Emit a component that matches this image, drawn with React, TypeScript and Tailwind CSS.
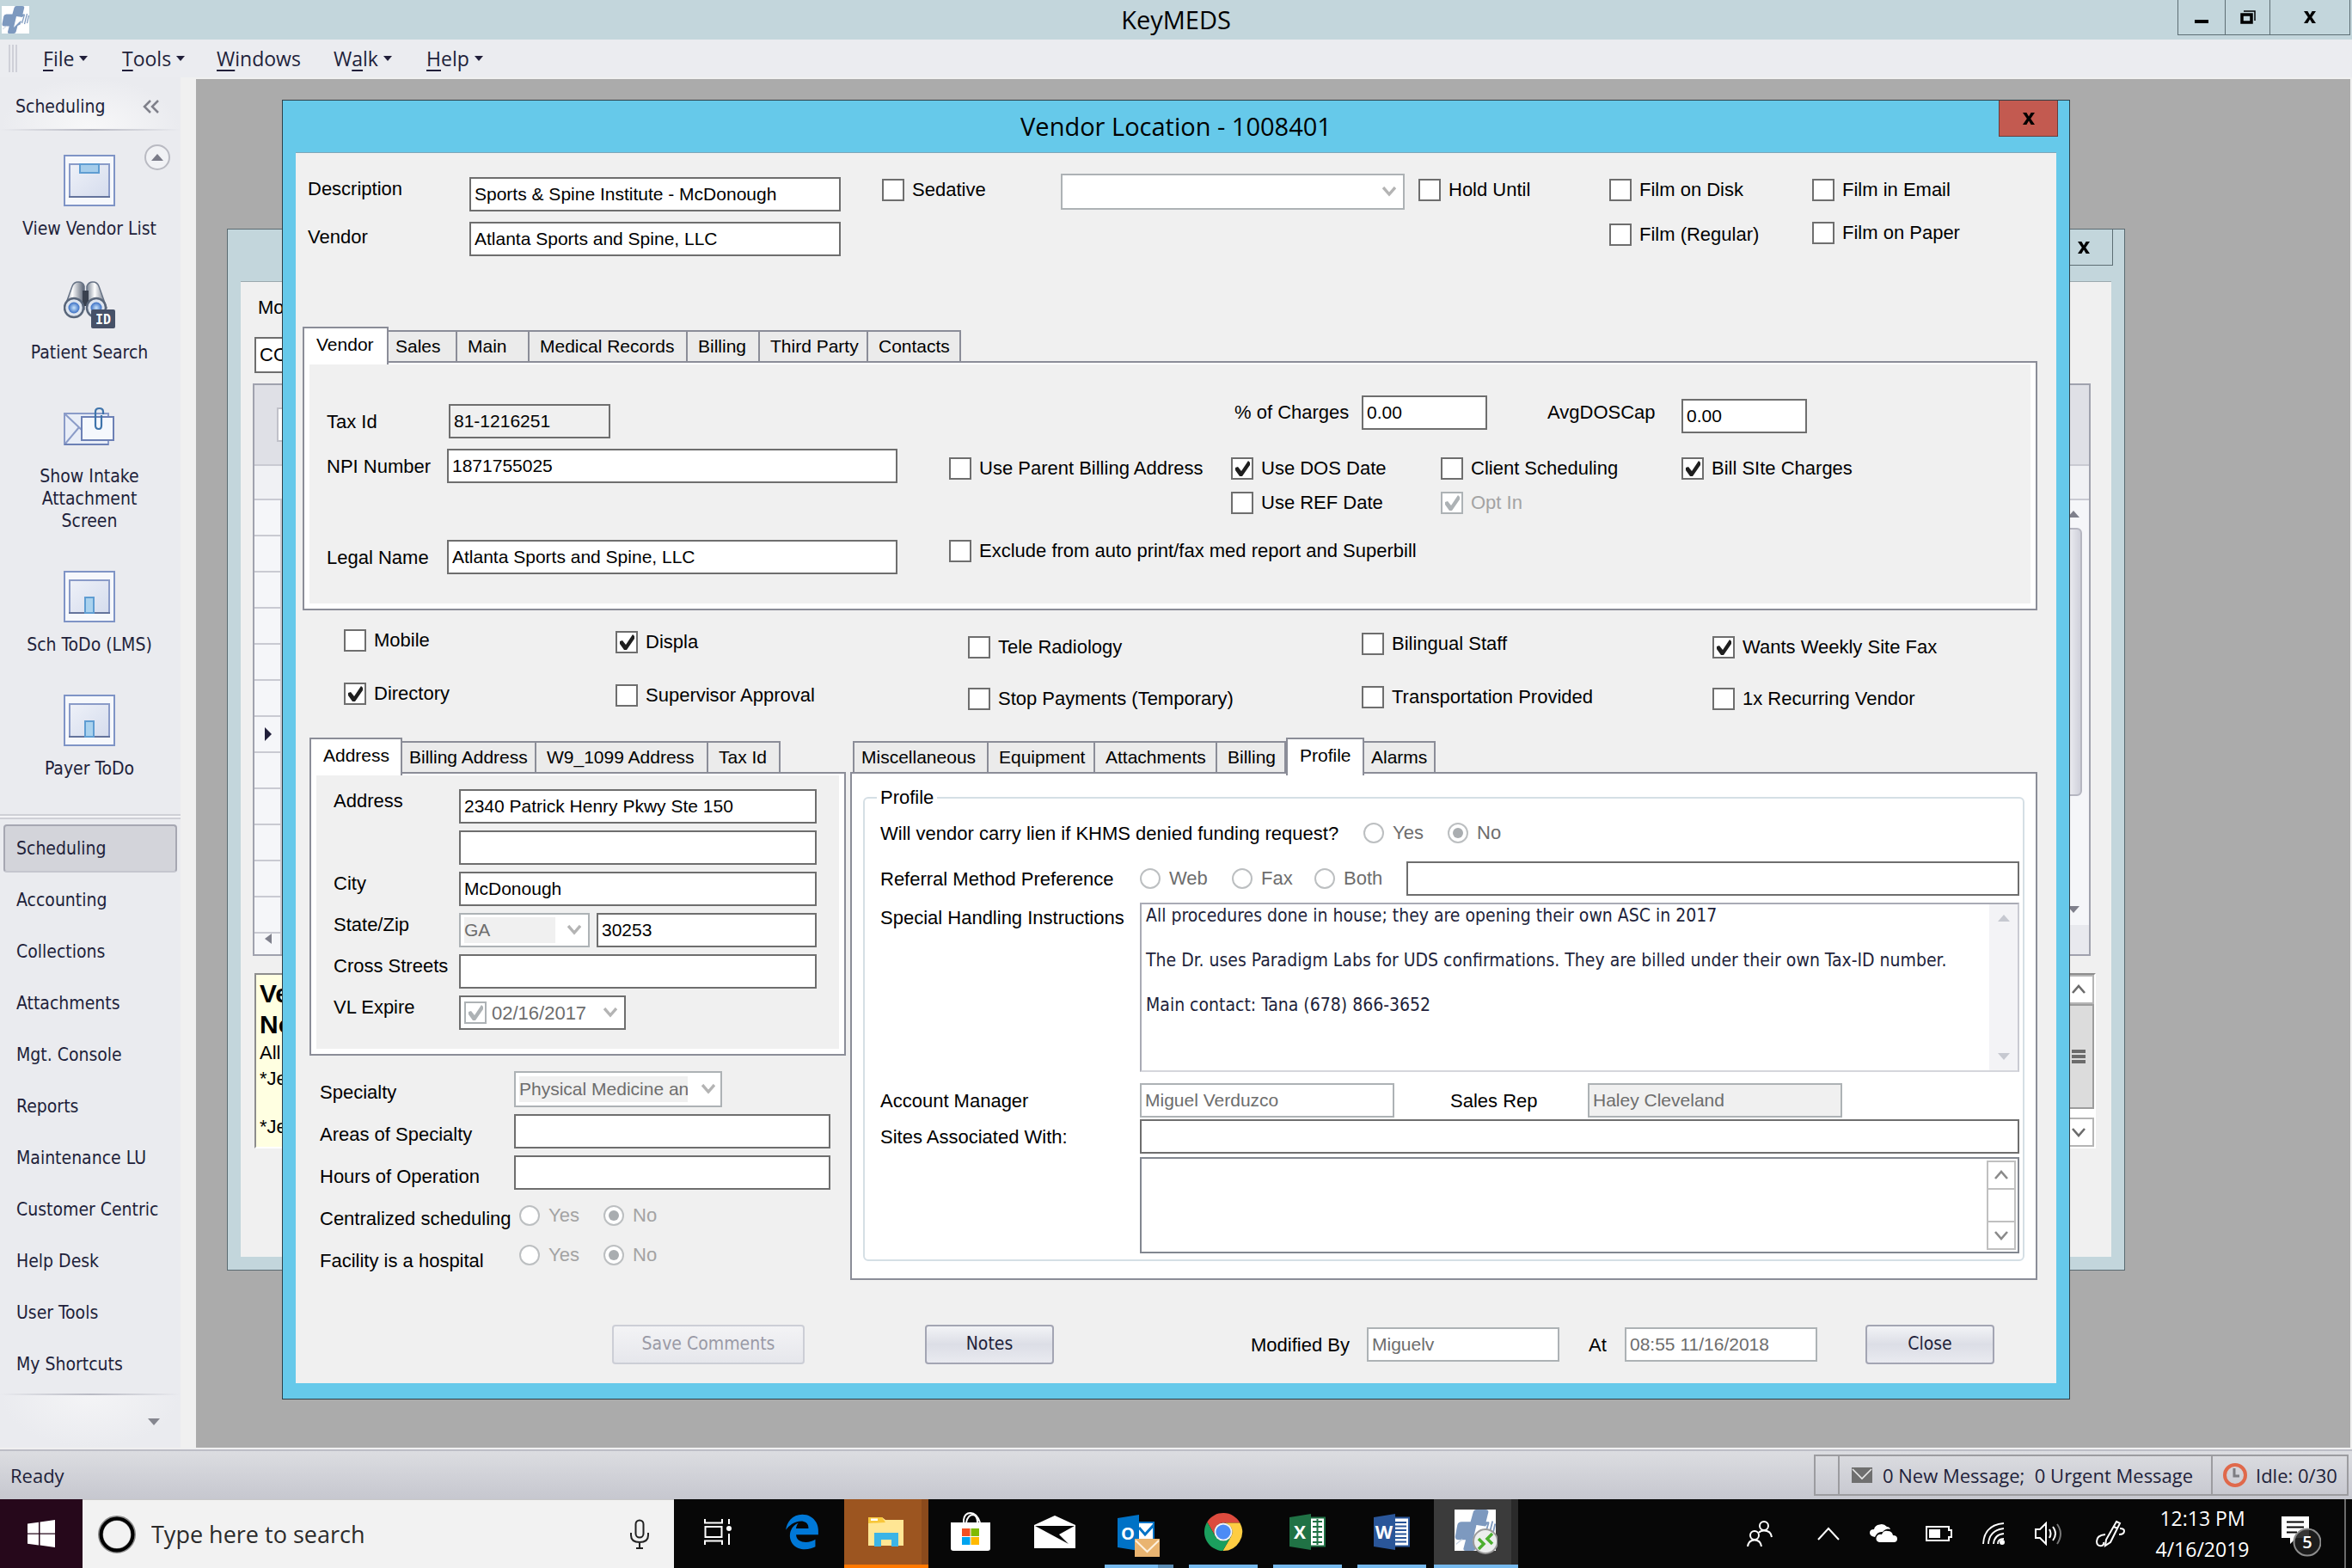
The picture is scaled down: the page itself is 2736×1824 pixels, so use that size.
import React from "react";
import { FaEdgeLegacy } from "react-icons/fa";

/* ---------- shared form pieces ---------- */

const inputBase = "h-10 border-2 pl-1 pr-1 text-[21px] leading-8 rounded-none outline-none";

function TextBox({
  id,
  value = "",
  className = "",
  look = "normal",
  label,
}: {
  id: string;
  value?: string;
  className?: string;
  look?: "normal" | "readonly" | "muted" | "disabled";
  label?: string;
}) {
  const looks = {
    normal: "border-[#6e6e6e] bg-white text-black",
    readonly: "border-[#6e6e6e] bg-[#f0f0f0] text-black",
    muted: "border-[#adb2b5] bg-white text-[#6d6d6d]",
    disabled: "border-[#adb2b5] bg-[#f0f0f0] text-[#6d6d6d]",
  };
  return (
    <input
      id={id}
      type="text"
      aria-label={label}
      defaultValue={value}
      readOnly={look !== "normal"}
      className={`${inputBase} ${looks[look]} ${className}`}
    />
  );
}

function Tick({ color }: { color: string }) {
  return (
    <svg viewBox="0 0 26 26" className="pointer-events-none col-start-1 row-start-1 size-[26px]">
      <path d="M5 12 L8 11 L12 16 L20 4 L22 6 L22 9 L13 22 L10 22 L5 15 Z" fill={color} />
    </svg>
  );
}

function Check({
  label,
  checked = false,
  disabled = false,
  className = "",
}: {
  label: string;
  checked?: boolean;
  disabled?: boolean;
  className?: string;
}) {
  return (
    <label className={`flex h-[26px] items-center gap-[9px] whitespace-nowrap text-[22px] leading-[26px] ${disabled ? "text-[#a3a3a3]" : "text-black"} ${className}`}>
      <span className="grid size-[26px] shrink-0">
        <input
          type="checkbox"
          defaultChecked={checked}
          disabled={disabled}
          className={`col-start-1 row-start-1 size-[26px] appearance-none border-2 bg-white ${disabled ? "border-[#adb2b5]" : "border-[#6e6e6e]"}`}
        />
        {checked && <Tick color={disabled ? "#adb2b5" : "#1f1f1f"} />}
      </span>
      {label}
    </label>
  );
}

function Radio({
  name,
  label,
  checked = false,
  className = "",
}: {
  name: string;
  label: string;
  checked?: boolean;
  className?: string;
}) {
  return (
    <label className={`flex items-center gap-[10px] text-[22px] leading-6 ${className}`}>
      <span className="grid size-6 shrink-0 place-items-center">
        <input
          type="radio"
          name={name}
          defaultChecked={checked}
          disabled
          className="col-start-1 row-start-1 size-6 appearance-none rounded-full border-2 border-[#bcbfc1] bg-white"
        />
        {checked && <span className="pointer-events-none col-start-1 row-start-1 size-3 rounded-full bg-[#a9adb0]" />}
      </span>
      {label}
    </label>
  );
}

function ComboArrow({ className = "" }: { className?: string }) {
  return (
    <svg viewBox="0 0 16 12" className={`h-3 w-4 shrink-0 ${className}`}>
      <path d="M1 1 L8 9 L15 1" fill="none" stroke="#b4b4b4" strokeWidth="3.4" />
    </svg>
  );
}

function Tabs({
  items,
  label,
}: {
  items: { text: string; width: string; selected?: boolean }[];
  label: string;
}) {
  return (
    <div role="tablist" aria-label={label} className="flex h-10 items-end text-[21px] leading-6">
      {items.map((t, i) => (
        <button
          key={t.text}
          type="button"
          role="tab"
          aria-selected={!!t.selected}
          className={`whitespace-nowrap border-[#8b8d98] text-left text-black ${t.width} ${
            t.selected
              ? "relative -mb-1 h-11 border-x-2 border-t-2 bg-white pb-1 pl-[14px]"
              : `h-9 border-t-2 border-r-2 bg-[#ebebeb] ${i === 0 || items[i - 1].selected ? "pl-2" : "pl-3"}`
          } ${i === 0 ? "border-l-2" : ""}`}
        >
          {t.text}
        </button>
      ))}
    </div>
  );
}

function CloseGlyph() {
  return (
    <svg viewBox="0 0 16 16" className="size-4">
      <path d="M1 1 H5.4 L8 5.4 L10.6 1 H15 L10.2 8 L15 15 H10.6 L8 10.6 L5.4 15 H1 L5.8 8 Z" fill="#000" />
    </svg>
  );
}

function Chevron({ dir, color = "#6b6b6b" }: { dir: "up" | "down"; color?: string }) {
  return (
    <svg viewBox="0 0 16 12" className="h-3 w-4">
      <path d={dir === "up" ? "M1 10 L8 2 L15 10" : "M1 2 L8 10 L15 2"} fill="none" stroke={color} strokeWidth="2.6" />
    </svg>
  );
}

function Triangle({ dir, color, className = "h-2 w-3" }: { dir: "up" | "down" | "left" | "right"; color: string; className?: string }) {
  const d = { up: "M0 10 L5 0 L10 10 Z", down: "M0 0 L10 0 L5 10 Z", left: "M10 0 L10 10 L0 5 Z", right: "M0 0 L10 5 L0 10 Z" }[dir];
  return (
    <svg viewBox="0 0 10 10" preserveAspectRatio="none" className={className}>
      <path d={d} fill={color} />
    </svg>
  );
}

/* ---------- logos and drawings ---------- */

function LogoArt() {
  return (
    <g>
      <rect width="32" height="32" fill="#fff" />
      <path
        d="M17 0 H24 Q27 0 26 3 L24.4 9.5 H27 L24 13 L17 12 L18 15 L16.5 20 L23 17 L21.5 21.5 L18.5 23 L16.6 30 Q16 32 14 32 H8.500 Q6.500 32 7 30 L8.700 23.500 H3 Q0 23.500 .6 20.500 L2.200 12 Q2.800 9.500 5.500 9.500 H12.400 L14.400 2.300 Q15 0 17 0 Z"
        fill="#7d99bf"
      />
      <path d="M14 25 L17 12 L23 16 Z" fill="#fff" />
      <path d="M23.500 20 L26.500 10 M26.500 21 L29.500 9 M29.500 20 L31.500 11" stroke="#7d99bf" strokeWidth="1.200" />
      <path d="M1 27 L6 23" stroke="#c6d2e2" strokeWidth="1" />
    </g>
  );
}

function FrameIcon({ kind }: { kind: "box" | "door" }) {
  return (
    <svg viewBox="0 0 60 60" className="size-[60px]">
      <defs>
        <linearGradient id={`f-${kind}`} x1="0" y1="0" x2="1" y2="1">
          <stop offset="0" stopColor="#eef1f8" />
          <stop offset="1" stopColor="#d5dced" />
        </linearGradient>
      </defs>
      <rect x="1" y="1" width="58" height="58" fill="#f6f8fc" stroke="#7f94c6" strokeWidth="2" />
      <rect x="7" y="11" width="46" height="38" fill={`url(#f-${kind})`} stroke="#8a9bc8" strokeWidth="2" />
      <path d="M6 49 H54" stroke="#64749c" strokeWidth="2" />
      {kind === "box" ? (
        <rect x="19" y="11" width="22" height="10" fill="#a5cdeb" stroke="#5f9dd2" strokeWidth="2" />
      ) : (
        <rect x="25" y="31" width="10" height="18" fill="#aad2ee" stroke="#5f9dd2" strokeWidth="2" />
      )}
    </svg>
  );
}

function BinocularsIcon() {
  return (
    <svg viewBox="0 0 60 60" className="size-[60px]">
      <defs>
        <linearGradient id="barrel" x1="0" x2="1">
          <stop offset="0" stopColor="#7b8695" />
          <stop offset=".4" stopColor="#ffffff" />
          <stop offset="1" stopColor="#566072" />
        </linearGradient>
        <radialGradient id="lens">
          <stop offset="0" stopColor="#c9e4fb" />
          <stop offset="1" stopColor="#3a6fc4" />
        </radialGradient>
      </defs>
      <path d="M10 9 Q12 4 17 4 Q23 4 24 9 L24 36 L1 34 Z" fill="url(#barrel)" stroke="#667285" strokeWidth="1.500" />
      <path d="M27 9 Q29 4 34 4 Q39 4 41 9 L50 34 L27 36 Z" fill="url(#barrel)" stroke="#667285" strokeWidth="1.500" />
      <rect x="22" y="14" width="7" height="18" fill="#39414f" />
      <circle cx="12" cy="34" r="11" fill="#dde4ee" stroke="#59667a" strokeWidth="2.500" />
      <circle cx="12" cy="34" r="6.500" fill="url(#lens)" />
      <circle cx="38" cy="34" r="11" fill="#dde4ee" stroke="#59667a" strokeWidth="2.500" />
      <circle cx="38" cy="34" r="6.500" fill="url(#lens)" />
      <rect x="32" y="36" width="28" height="22" rx="2" fill="#465168" />
      <text x="46" y="53" textAnchor="middle" fontSize="15" fontWeight="700" fontFamily="DejaVu Sans Mono, monospace" fill="#fff">
        ID
      </text>
    </svg>
  );
}

function IntakeIcon() {
  return (
    <svg viewBox="0 0 60 60" className="size-[60px]">
      <rect x="1" y="13" width="51" height="36" fill="#e8edf7" stroke="#8a9bc8" strokeWidth="2" />
      <path d="M2 14 L22 33 M2 48 L18 29" stroke="#8a9bc8" strokeWidth="2" fill="none" />
      <path d="M1 49 H52" stroke="#6c80b5" strokeWidth="2" />
      <rect x="21" y="17" width="37" height="27" fill="#f5f8fd" stroke="#6c80b5" strokeWidth="2" />
      <path d="M46 14 V11 Q46 7 41.500 7 Q37 7 37 11 V27 Q37 31 41 31 Q44 31 44 27 V15" fill="none" stroke="#3f74ab" strokeWidth="2.200" />
    </svg>
  );
}

/* ---------- data ---------- */

const menus = [
  { pre: "", key: "F", post: "ile", arrow: true, width: "w-[92px]" },
  { pre: "", key: "T", post: "ools", arrow: true, width: "w-[110px]" },
  { pre: "", key: "W", post: "indows", arrow: false, width: "w-[136px]" },
  { pre: "W", key: "a", post: "lk", arrow: true, width: "w-[108px]" },
  { pre: "", key: "H", post: "elp", arrow: true, width: "w-[90px]" },
];

const shortcuts = [
  { text: "View Vendor List", icon: <FrameIcon kind="box" /> },
  { text: "Patient Search", icon: <BinocularsIcon /> },
  { text: "Show Intake Attachment Screen", icon: <IntakeIcon /> },
  { text: "Sch ToDo (LMS)", icon: <FrameIcon kind="door" /> },
  { text: "Payer ToDo", icon: <FrameIcon kind="door" /> },
];

const navItems = [
  "Scheduling",
  "Accounting",
  "Collections",
  "Attachments",
  "Mgt. Console",
  "Reports",
  "Maintenance LU",
  "Customer Centric",
  "Help Desk",
  "User Tools",
  "My Shortcuts",
];

const instructions =
  "All procedures done in house; they are opening their own ASC in 2017\n\nThe Dr. uses Paradigm Labs for UDS confirmations. They are billed under their own Tax-ID number.\n\nMain contact: Tana (678) 866-3652";

const uiFont = "font-['Open_Sans','Noto_Sans',sans-serif]";
const tahoma = "font-['DejaVu_Sans_Condensed','Noto_Sans',sans-serif]";
const formFont = "font-['Liberation_Sans',Arial,sans-serif]";

/* ---------- application chrome ---------- */

function TitleBar() {
  return (
    <header className={`flex h-[46px] items-start bg-[#c3d6dc] ${uiFont}`}>
      <div className="flex h-full flex-1 items-center pl-0.5">
        <svg viewBox="0 0 32 32" className="size-8">
          <LogoArt />
        </svg>
      </div>
      <h1 className="flex h-full items-center text-[29px] leading-9 text-black">KeyMEDS</h1>
      <div className="flex flex-1 justify-end pr-0.5">
        <button type="button" aria-label="Minimize" className="flex h-[41px] w-[55px] items-end justify-center border border-t-0 border-r-0 border-[#5d6e74] pb-[13px]">
          <span className="h-1 w-4 bg-black" />
        </button>
        <button type="button" aria-label="Restore" className="flex h-[41px] w-[52px] items-center justify-center border border-t-0 border-r-0 border-[#5d6e74]">
          <svg viewBox="0 0 18 16" className="h-4 w-[18px]">
            <path d="M4 1 H17 V12" fill="none" stroke="#000" strokeWidth="1.500" />
            <rect x="2" y="5" width="11" height="9" fill="none" stroke="#000" strokeWidth="3.500" />
          </svg>
        </button>
        <button type="button" aria-label="Close application" className="flex h-[41px] w-[94px] items-center justify-center border border-t-0 border-[#5d6e74]">
          <CloseGlyph />
        </button>
      </div>
    </header>
  );
}

function MenuBar() {
  return (
    <nav aria-label="Menu" className={`flex h-11 items-center bg-[#ebecf0] pl-[10px] text-[23px] leading-7 text-[#211f3a] ${uiFont}`}>
      <span className="mr-[30px] flex h-8 w-[10px] justify-between">
        <span className="w-0.5 bg-[#cfd0d8]" />
        <span className="w-0.5 bg-[#cfd0d8]" />
        <span className="w-0.5 bg-[#cfd0d8]" />
      </span>
      {menus.map((m) => (
        <button key={m.key} type="button" className={`flex items-center gap-1.5 ${m.width}`}>
          <span>
            {m.pre}
            <span className="underline decoration-2 underline-offset-4">{m.key}</span>
            {m.post}
          </span>
          {m.arrow && <Triangle dir="down" color="#211f3a" className="h-1.5 w-2.5" />}
        </button>
      ))}
    </nav>
  );
}

function Sidebar() {
  return (
    <aside className={`flex w-[210px] shrink-0 flex-col bg-[#eaebef] text-[21px] leading-[26px] text-[#211f3a] ${tahoma}`}>
      <div className="flex h-[60px] items-center justify-between bg-radial-[at_50%_100%] from-[#f8f8f9] to-[#eaebef] to-70% pt-2 pr-6 pl-[18px]">
        <h2>Scheduling</h2>
        <button type="button" aria-label="Collapse panel">
          <svg viewBox="0 0 20 16" className="h-4 w-5">
            <path d="M9 1 L2 8 L9 15 M18 1 L11 8 L18 15" fill="none" stroke="#7f808a" strokeWidth="2.500" />
          </svg>
        </button>
      </div>
      <div className="h-0.5 bg-linear-to-r from-[#eaebef] via-[#b9bac4] to-[#eaebef]" />
      <div className="relative pt-7 pr-0.5 pb-10">
        <button type="button" aria-label="Scroll up" className="absolute top-4 right-3 flex size-[30px] items-center justify-center rounded-full border-2 border-[#b9bac2] bg-[#f1f2f5]">
          <Triangle dir="up" color="#7a7b88" className="h-2 w-3.5" />
        </button>
        <div className="flex flex-col items-center gap-[45px]">
          {shortcuts.map((s) => (
            <button key={s.text} type="button" className="flex w-[180px] flex-col items-center gap-[13px] text-center">
              {s.icon}
              <span className="max-w-[170px]">{s.text}</span>
            </button>
          ))}
        </div>
      </div>
      <div className="h-1.5 border-y-2 border-[#cfd0d6] bg-[#f4f4f7]" />
      <nav aria-label="Modules" className="flex flex-col gap-1 px-1 py-1.5">
        {navItems.map((n, i) => (
          <button
            key={n}
            type="button"
            className={`h-14 border-2 pl-[13px] text-left ${
              i === 0 ? "rounded-sm border-[#a6a7b2] border-b-[#c5c6ce] bg-[#d3d4da]" : "border-transparent"
            }`}
          >
            {n}
          </button>
        ))}
      </nav>
      <div className="h-0.5 bg-linear-to-r from-[#eaebef] via-[#b9bac4] to-[#eaebef]" />
      <div className="flex flex-1 items-center justify-end bg-radial-[at_50%_0%] from-[#f4f4f6] to-[#eaebef] to-70% pr-6">
        <button type="button" aria-label="More modules">
          <Triangle dir="down" color="#85868f" className="h-2 w-3.5" />
        </button>
      </div>
    </aside>
  );
}

/* ---------- window behind the dialog ---------- */

function BackWindow() {
  const rows = Array.from({ length: 12 }, (_, i) => i);
  return (
    <section aria-label="Background window" className="col-start-1 row-start-1 mt-[174px] mr-[262px] mb-[206px] ml-9 flex flex-col border border-[#5b6b71] bg-[#c3d6dc] px-[15px] pb-[15px]">
      <div className="flex h-[60px] items-start justify-end">
        <button type="button" aria-label="Close window" className="-mr-0.5 flex h-[42px] w-[69px] items-center justify-end border border-t-0 border-[#5d6e74] pr-[25px]">
          <CloseGlyph />
        </button>
      </div>
      <div className="flex flex-1 flex-col border-t border-[#9ba9ae] bg-[#f0f0f0] pr-[18px] pl-[14px] text-[22px] leading-7 text-black">
        <label htmlFor="mode" className="mt-4 pl-[6px]">Mo</label>
        <input id="mode" type="text" defaultValue="CO" className="mt-5 ml-0.5 h-[42px] w-[500px] border-2 border-[#6e6e6e] bg-white pl-1 text-[22px]" />
        <div className="mt-3 mr-[6px] flex h-[666px] flex-col border-2 border-[#a0a2ae] bg-[#f5f6f9]">
          <div className="flex h-[94px] items-center border-b-2 border-[#c9cad2] bg-[#dfe0e6] pl-[26px]">
            <span className="h-10 w-8 border-2 border-[#c0c1c9] bg-white" />
          </div>
          <div className="h-10 border-b-2 border-[#c9cad2] bg-[#f0f1f4]" />
          <div className="flex flex-1">
            <div className="w-8 border-r-2 border-[#c9cad2]">
              {rows.map((r) => (
                <div key={r} className="flex h-[42px] items-center border-b-2 border-[#c9cad2] pl-3">
                  {r === 6 && <Triangle dir="right" color="#211f3a" className="h-4 w-2" />}
                </div>
              ))}
              <div className="flex h-5 items-start pl-3">
                <Triangle dir="left" color="#7f808c" className="h-3 w-2" />
              </div>
            </div>
            <div className="ml-auto flex w-9 flex-col items-center bg-[#f5f6f9]">
              <span className="flex h-8 items-center">
                <Triangle dir="up" color="#7f808c" className="h-2 w-3.5" />
              </span>
              <span className="h-[312px] w-5 rounded-md border-2 border-[#b5b6c1] bg-linear-to-r from-[#f3f3f7] to-[#cfd0da]" />
              <span className="mt-auto mb-3.5">
                <Triangle dir="down" color="#7f808c" className="h-2 w-3.5" />
              </span>
              <span className="h-[34px] w-full bg-[#e8e9ee]" />
            </div>
          </div>
        </div>
        <div className="mt-5 ml-0.5 flex h-[204px] border-2 border-[#8d8d8d] border-r-white border-b-white bg-[#ffffe1]">
          <div className="flex-1 pt-1 pl-1">
            <p className="text-[30px] leading-9 font-bold">Ve</p>
            <p className="text-[30px] leading-9 font-bold">No</p>
            <p className="leading-[30px]">All</p>
            <p className="leading-[30px]">*Je</p>
            <p className="mt-[26px] leading-[30px]">*Je</p>
          </div>
          <div className="flex w-9 flex-col bg-white">
            <span className="flex h-[34px] items-center justify-center border-2 border-[#b5b5b5]">
              <Chevron dir="up" />
            </span>
            <span className="flex h-[122px] flex-col items-center justify-center gap-0.5 border-2 border-[#9d9d9d] bg-[#dcdcdc]">
              <span className="h-1 w-4 bg-[#6b6b6b]" />
              <span className="h-1 w-4 bg-[#6b6b6b]" />
              <span className="h-1 w-4 bg-[#6b6b6b]" />
            </span>
            <span className="mt-auto flex h-[34px] items-center justify-center border-2 border-[#b5b5b5]">
              <Chevron dir="down" />
            </span>
          </div>
        </div>
      </div>
    </section>
  );
}

/* ---------- dialog sections ---------- */

function HeaderFields() {
  return (
    <div className="flex items-start pt-6 pl-[14px]">
      <div className="flex flex-col gap-3 pt-1">
        <div className="flex items-start">
          <label htmlFor="description" className="w-[188px] text-[22px] leading-7">Description</label>
          <TextBox id="description" value="Sports & Spine Institute - McDonough" className="w-[432px]" />
        </div>
        <div className="flex items-start">
          <label htmlFor="vendor" className="w-[188px] text-[22px] leading-9">Vendor</label>
          <TextBox id="vendor" value="Atlanta Sports and Spine, LLC" className="w-[432px]" />
        </div>
      </div>
      <Check label="Sedative" className="mt-1.5 ml-12 w-[208px]" />
      <div className="mr-4 flex h-[42px] w-[400px] items-center border-2 border-[#adb2b5] bg-white pr-2">
        <select aria-label="Sedative type" disabled className="h-[34px] flex-1 appearance-none bg-white pl-1 text-[21px]">
          <option></option>
        </select>
        <ComboArrow />
      </div>
      <Check label="Hold Until" className="mt-1.5 w-[222px]" />
      <div className="mt-1.5 flex w-[236px] flex-col gap-[26px]">
        <Check label="Film on Disk" />
        <Check label="Film (Regular)" />
      </div>
      <div className="mt-1.5 flex flex-col gap-6">
        <Check label="Film in Email" />
        <Check label="Film on Paper" />
      </div>
    </div>
  );
}

function VendorPanel() {
  return (
    <div className="mr-[22px] border-2 border-[#8b8d98] bg-white px-1.5 pt-0.5 pb-1.5">
      <div className="flex items-start bg-[#f0f0f0] pb-[34px] pl-5">
        <div className="flex flex-col pt-[46px]">
          <div className="flex items-center">
            <label htmlFor="taxid" className="w-[142px] text-[22px]">Tax Id</label>
            <TextBox id="taxid" value="81-1216251" look="readonly" className="w-[188px]" />
          </div>
          <div className="mt-3 flex items-center">
            <label htmlFor="npi" className="w-[140px] text-[22px]">NPI Number</label>
            <TextBox id="npi" value="1871755025" className="w-[524px]" />
          </div>
          <div className="mt-[66px] flex items-center">
            <label htmlFor="legal" className="w-[140px] text-[22px]">Legal Name</label>
            <TextBox id="legal" value="Atlanta Sports and Spine, LLC" className="w-[524px]" />
          </div>
        </div>
        <div className="ml-[60px] flex flex-col pt-9">
          <div className="ml-[332px] flex items-start">
            <label htmlFor="pct" className="w-[148px] text-[22px] leading-10">% of Charges</label>
            <TextBox id="pct" value="0.00" className="w-[146px]" />
            <label htmlFor="cap" className="ml-[70px] w-[156px] text-[22px] leading-10">AvgDOSCap</label>
            <TextBox id="cap" value="0.00" className="mt-1 w-[146px]" />
          </div>
          <div className="mt-7 grid grid-cols-[328px_244px_280px_auto] gap-y-[14px]">
            <Check label="Use Parent Billing Address" />
            <Check label="Use DOS Date" checked />
            <Check label="Client Scheduling" />
            <Check label="Bill SIte Charges" checked />
            <Check label="Use REF Date" className="col-start-2" />
            <Check label="Opt In" checked disabled />
          </div>
          <Check label="Exclude from auto print/fax med report and Superbill" className="mt-[30px]" />
        </div>
      </div>
    </div>
  );
}

function FlagGrid() {
  return (
    <div className="mt-[22px] grid grid-cols-[316px_410px_458px_408px_auto] pl-14">
      <div className="flex flex-col gap-9">
        <Check label="Mobile" />
        <Check label="Directory" checked />
      </div>
      <div className="flex flex-col gap-9 pt-0.5">
        <Check label="Displa" checked />
        <Check label="Supervisor Approval" />
      </div>
      <div className="flex flex-col gap-[34px] pt-2">
        <Check label="Tele Radiology" />
        <Check label="Stop Payments (Temporary)" />
      </div>
      <div className="flex flex-col gap-9 pt-1">
        <Check label="Bilingual Staff" />
        <Check label="Transportation Provided" />
      </div>
      <div className="flex flex-col gap-[34px] pt-2">
        <Check label="Wants Weekly Site Fax" checked />
        <Check label="1x Recurring Vendor" />
      </div>
    </div>
  );
}

function AddressRow({ id, label, children }: { id: string; label: string; children: React.ReactNode }) {
  return (
    <div className="flex items-start">
      <label htmlFor={id} className="w-[146px] text-[22px] leading-7 whitespace-nowrap">{label}</label>
      {children}
    </div>
  );
}

function AddressPanel() {
  return (
    <div className="border-2 border-[#8b8d98] bg-white px-1.5 pt-0.5 pb-1.5">
      <div className="flex flex-col gap-2 bg-[#f0f0f0] pt-4 pb-[22px] pl-5">
        <AddressRow id="addr1" label="Address">
          <TextBox id="addr1" value="2340 Patrick Henry Pkwy Ste 150" className="w-[416px]" />
        </AddressRow>
        <AddressRow id="addr2" label="">
          <TextBox id="addr2" label="Address line 2" className="w-[416px]" />
        </AddressRow>
        <AddressRow id="city" label="City">
          <TextBox id="city" value="McDonough" className="w-[416px]" />
        </AddressRow>
        <AddressRow id="state" label="State/Zip">
          <div className="flex h-10 w-[152px] items-center border-2 border-[#adb2b5] bg-white pr-2 pl-1">
            <select id="state" disabled className="h-[30px] w-[106px] appearance-none bg-[#f0f0f0] text-[21px] leading-[30px] text-[#6d6d6d] opacity-100">
              <option>GA</option>
            </select>
            <ComboArrow className="ml-auto" />
          </div>
          <TextBox id="zip" label="Zip" value="30253" className="ml-2 w-64" />
        </AddressRow>
        <AddressRow id="cross" label="Cross Streets">
          <TextBox id="cross" className="w-[416px]" />
        </AddressRow>
        <AddressRow id="expire" label="VL Expire">
          <div className="flex h-10 w-[194px] items-center border-2 border-[#6e6e6e] bg-white pr-2 pl-1">
            <span className="grid size-[26px] shrink-0">
              <input type="checkbox" aria-label="VL expire set" defaultChecked disabled className="col-start-1 row-start-1 size-[26px] appearance-none border-2 border-[#adb2b5] bg-white" />
              <Tick color="#adb2b5" />
            </span>
            <input id="expire" type="text" readOnly defaultValue="02/16/2017" className="ml-1.5 w-[122px] text-[22px] text-[#6d6d6d]" />
            <ComboArrow className="ml-auto" />
          </div>
        </AddressRow>
      </div>
    </div>
  );
}

function SpecialtyFields() {
  return (
    <div className="mt-[18px] flex items-start pl-3">
      <div className="flex w-[226px] flex-col gap-[23px] pt-3 text-[22px] leading-[26px] whitespace-nowrap">
        <label htmlFor="specialty">Specialty</label>
        <label htmlFor="areas">Areas of Specialty</label>
        <label htmlFor="hours">Hours of Operation</label>
        <span id="central-label">Centralized scheduling</span>
        <span id="hospital-label">Facility is a hospital</span>
      </div>
      <div className="flex flex-col">
        <div className="flex h-[42px] w-[242px] items-center border-2 border-[#adb2b5] bg-white pr-1.5 pl-1">
          <select id="specialty" disabled className="h-[30px] w-[196px] appearance-none overflow-hidden bg-[#f0f0f0] text-[21px] leading-[30px] text-clip text-[#6d6d6d] opacity-100">
            <option>Physical Medicine and Rehab</option>
          </select>
          <ComboArrow className="ml-auto" />
        </div>
        <TextBox id="areas" className="mt-2 w-[368px]" />
        <TextBox id="hours" className="mt-2 w-[368px]" />
        <div role="radiogroup" aria-labelledby="central-label" className="mt-[18px] flex pl-1.5 text-[#a3a3a3]">
          <Radio name="central" label="Yes" className="w-[98px]" />
          <Radio name="central" label="No" checked />
        </div>
        <div role="radiogroup" aria-labelledby="hospital-label" className="mt-[22px] flex pl-1.5 text-[#a3a3a3]">
          <Radio name="hospital" label="Yes" className="w-[98px]" />
          <Radio name="hospital" label="No" checked />
        </div>
      </div>
    </div>
  );
}

function ProfilePanel() {
  return (
    <div className="border-2 border-[#8b8d98] bg-white px-[13px] pt-[15px] pb-5">
      <fieldset className="min-w-0 rounded-md border-2 border-[#d5dfe5] pr-1 pb-[7px] pl-[18px] text-[22px] text-black">
        <legend className="-ml-1 px-1 leading-[26px]">Profile</legend>
        <div className="mt-[14px] flex h-7 items-center">
          <span id="lien-label" className="w-[562px] whitespace-nowrap">Will vendor carry lien if KHMS denied funding request?</span>
          <div role="radiogroup" aria-labelledby="lien-label" className="flex text-[#6d6d6d]">
            <Radio name="lien" label="Yes" className="w-[98px]" />
            <Radio name="lien" label="No" checked />
          </div>
        </div>
        <div className="mt-[19px] flex items-center">
          <span id="ref-label" className="w-[302px] whitespace-nowrap">Referral Method Preference</span>
          <div role="radiogroup" aria-labelledby="ref-label" className="flex text-[#6d6d6d]">
            <Radio name="ref" label="Web" className="w-[107px]" />
            <Radio name="ref" label="Fax" className="w-[96px]" />
            <Radio name="ref" label="Both" className="w-[107px]" />
          </div>
          <TextBox id="refother" label="Referral details" className="min-w-0 flex-1" />
        </div>
        <div className="mt-2 flex items-start">
          <label htmlFor="special" className="w-[302px] leading-9 whitespace-nowrap">Special Handling Instructions</label>
          <div className="flex h-[197px] min-w-0 flex-1 border-2 border-[#a9abb5] border-r-[#c9cad2] border-b-[#d5d6dc]">
            <textarea
              id="special"
              readOnly
              defaultValue={instructions}
              className={`min-w-0 flex-1 resize-none overflow-hidden pl-[5px] text-[21px] leading-[26px] text-[#211f3a] outline-none ${tahoma}`}
            />
            <div className="flex w-[33px] flex-col items-center justify-between bg-[#f3f3f6] py-3">
              <Triangle dir="up" color="#c6c8d0" className="h-2 w-3.5" />
              <Triangle dir="down" color="#c6c8d0" className="h-2 w-3.5" />
            </div>
          </div>
        </div>
        <div className="mt-[13px] flex items-center">
          <label htmlFor="manager" className="w-[302px]">Account Manager</label>
          <TextBox id="manager" value="Miguel Verduzco" look="muted" className="w-[296px]" />
          <label htmlFor="rep" className="ml-[65px] w-[160px]">Sales Rep</label>
          <TextBox id="rep" value="Haley Cleveland" look="disabled" className="w-[296px]" />
        </div>
        <div className="mt-0.5 flex items-center">
          <label htmlFor="sites" className="w-[302px]">Sites Associated With:</label>
          <TextBox id="sites" className="min-w-0 flex-1" />
        </div>
        <div className="mt-1 ml-[302px] flex h-28 justify-end border-2 border-[#828790] p-0.5">
          <div className="flex w-[34px] flex-col border-2 border-[#c0c0c0]">
            <button type="button" aria-label="Scroll sites up" className="flex h-8 items-center justify-center border-b-2 border-[#c0c0c0]">
              <Chevron dir="up" color="#8a8a8a" />
            </button>
            <button type="button" aria-label="Scroll sites down" className="mt-auto flex h-8 items-center justify-center border-t-2 border-[#c0c0c0]">
              <Chevron dir="down" color="#8a8a8a" />
            </button>
          </div>
        </div>
      </fieldset>
    </div>
  );
}

function DialogFooter() {
  const button = "h-[46px] rounded-sm border-2 bg-linear-to-b text-[21px]";
  return (
    <div className="flex items-center pt-[52px] pr-[72px] pb-[22px] pl-[368px]">
      <button type="button" disabled className={`${button} w-56 border-[#ccced6] from-[#f3f3f5] to-[#e6e7ec] text-[#9a9aa6] ${tahoma}`}>
        Save Comments
      </button>
      <button type="button" className={`${button} ml-[140px] w-[150px] border-[#a3a5b3] from-[#f2f3f6] via-[#dcdee6] to-[#e9eaf0] text-[#211f3a] ${tahoma}`}>
        Notes
      </button>
      <div className="ml-auto flex items-center">
        <label htmlFor="modby" className="w-[135px] text-[22px] whitespace-nowrap">Modified By</label>
        <TextBox id="modby" value="Miguelv" look="muted" className="w-56" />
        <label htmlFor="modat" className="ml-[34px] w-[42px] text-[22px]">At</label>
        <TextBox id="modat" value="08:55 11/16/2018" look="muted" className="w-56" />
        <button type="button" className={`${button} ml-14 w-[150px] border-[#a3a5b3] from-[#f2f3f6] via-[#dcdee6] to-[#e9eaf0] text-[#211f3a] ${tahoma}`}>
          Close
        </button>
      </div>
    </div>
  );
}

function VendorDialog() {
  return (
    <section role="dialog" aria-labelledby="dialog-title" className="z-10 col-start-1 row-start-1 mt-6 mr-[326px] mb-14 ml-[100px] border border-[#2f3f46] bg-[#66c9ea] px-[15px] pb-[15px]">
      <div className="flex h-[60px] items-start">
        <div className="flex-1" />
        <h2 id="dialog-title" className={`pt-2.5 text-[29px] leading-10 text-black ${uiFont}`}>Vendor Location - 1008401</h2>
        <div className="flex flex-1 justify-end">
          <button type="button" aria-label="Close dialog" className="-mr-0.5 flex h-[42px] w-[69px] items-center justify-center border border-t-0 border-[#6b3b39] bg-[#c35a50]">
            <CloseGlyph />
          </button>
        </div>
      </div>
      <div className="border-t border-[#7fa6b8] bg-[#f0f0f0] text-black">
        <HeaderFields />
        <div className="mt-[82px] pl-2">
          <Tabs
            label="Vendor sections"
            items={[
              { text: "Vendor", width: "w-[100px]", selected: true },
              { text: "Sales", width: "w-20" },
              { text: "Main", width: "w-[84px]" },
              { text: "Medical Records", width: "w-[184px]" },
              { text: "Billing", width: "w-[84px]" },
              { text: "Third Party", width: "w-[126px]" },
              { text: "Contacts", width: "w-[108px]" },
            ]}
          />
          <VendorPanel />
        </div>
        <FlagGrid />
        <div className="mt-8 flex items-start pr-[22px] pl-4">
          <div className="w-[624px] shrink-0">
            <Tabs
              label="Address sections"
              items={[
                { text: "Address", width: "w-[108px]", selected: true },
                { text: "Billing Address", width: "w-[156px]" },
                { text: "W9_1099 Address", width: "w-[200px]" },
                { text: "Tax Id", width: "w-[84px]" },
              ]}
            />
            <AddressPanel />
            <SpecialtyFields />
          </div>
          <div className="ml-[5px] min-w-0 flex-1">
            <div className="pl-[3px]">
              <Tabs
                label="Detail sections"
                items={[
                  { text: "Miscellaneous", width: "w-[158px]" },
                  { text: "Equipment", width: "w-[124px]" },
                  { text: "Attachments", width: "w-[142px]" },
                  { text: "Billing", width: "w-20" },
                  { text: "Profile", width: "w-[91px]", selected: true },
                  { text: "Alarms", width: "w-[83px]" },
                ]}
              />
            </div>
            <ProfilePanel />
          </div>
        </div>
        <DialogFooter />
      </div>
    </section>
  );
}

/* ---------- status bar and taskbar ---------- */

function StatusBar() {
  return (
    <div className={`flex h-[58px] items-center border-t-2 border-[#bdbec6] bg-linear-to-b from-[#dcdde1] to-[#c6c7cf] pr-1 pl-3 text-[22px] leading-7 text-[#211f3a] ${uiFont}`}>
      <span>Ready</span>
      <div className="ml-auto flex h-12 border-2 border-[#9c9ca0]">
        <div className="w-7 border-r-2 border-[#9c9ca0]" />
        <div className="flex w-[434px] items-center gap-3 border-r-2 border-[#9c9ca0] pl-[14px]">
          <svg viewBox="0 0 24 18" className="h-[18px] w-6">
            <rect width="24" height="18" fill="#6f6f6f" />
            <path d="M1 2 L12 13 L23 2" fill="none" stroke="#e8e8e8" strokeWidth="1.600" />
          </svg>
          <span className="whitespace-pre">0 New Message;  0 Urgent Message</span>
        </div>
        <div className="flex w-[156px] items-center gap-2.5 pl-3">
          <svg viewBox="0 0 28 28" className="size-7">
            <circle cx="14" cy="14" r="12" fill="none" stroke="#e0694b" strokeWidth="4" />
            <path d="M13 6 V15 H19" fill="none" stroke="#7d7d82" strokeWidth="3" />
          </svg>
          <span className="whitespace-nowrap">Idle: 0/30</span>
        </div>
      </div>
    </div>
  );
}

function OfficeIcon({ letter, color, lines }: { letter: string; color: string; lines: "grid" | "text" }) {
  return (
    <svg viewBox="0 0 42 42" className="size-[42px]">
      <rect x="23" y="4.500" width="18" height="33" fill="#fff" stroke={color} strokeWidth="2" />
      {lines === "grid" ? (
        <path d="M27 9 H38 M27 15 H38 M27 21 H38 M27 27 H38 M27 33 H38 M32.500 6 V36" stroke={color} strokeWidth="2" />
      ) : (
        <path d="M25 10 H38 M25 14.500 H38 M25 19 H38 M25 23.500 H38 M25 28 H38 M25 32.500 H38" stroke={color} strokeWidth="2" />
      )}
      <path d="M0 4 L25 0 V42 L0 38 Z" fill={color} />
      <text x="12" y="29" textAnchor="middle" fontSize="21" fontWeight="700" fontFamily="Open Sans, sans-serif" fill="#fff">
        {letter}
      </text>
    </svg>
  );
}

function TaskButton({
  label,
  children,
  state = "idle",
}: {
  label: string;
  children: React.ReactNode;
  state?: "idle" | "open" | "stack" | "active" | "alert";
}) {
  return (
    <button type="button" aria-label={label} className="flex w-[98px] flex-col">
      <span
        className={`flex w-full flex-1 items-center justify-center ${
          state === "alert" ? "border-r-8 border-[#8b4a1c] bg-[#9c5520] pl-2" : state === "active" ? "border-r-8 border-[#2a2a2a] bg-[#3b3b3b] pl-2" : ""
        }`}
      >
        {children}
      </span>
      <span className="flex h-1 w-full justify-center">
        {state === "open" && <span className="w-20 bg-[#76b9ed]" />}
        {state === "stack" && (
          <>
            <span className="w-[62px] bg-[#76b9ed]" />
            <span className="w-[18px] bg-[#5a8bb2]" />
          </>
        )}
        {state === "active" && <span className="w-full bg-[#76b9ed]" />}
        {state === "alert" && <span className="w-full bg-[#ff7800]" />}
      </span>
    </button>
  );
}

function Taskbar() {
  const tray = "flex items-center justify-center";
  return (
    <footer className={`flex h-20 items-stretch bg-[#070707] text-white ${uiFont}`}>
      <button type="button" aria-label="Start" className="flex w-24 items-center justify-center bg-[#26081b]">
        <svg viewBox="0 0 32 32" className="size-8">
          <path d="M0 4.500 L13 2.700 V15.500 H0 Z M14.500 2.500 L32 0 V15.500 H14.500 Z M0 16.700 H13 V29.500 L0 27.700 Z M14.500 16.700 H32 V32 L14.500 29.600 Z" fill="#fff" />
        </svg>
      </button>
      <div className="flex w-[688px] items-center border-t border-[#c8c8c8] bg-[#f2f2f2] pr-7 pl-[18px]">
        <svg viewBox="0 0 44 44" className="size-11">
          <circle cx="22" cy="22" r="19" fill="none" stroke="#8b8b8b" strokeWidth="6" />
          <circle cx="22" cy="22" r="18.500" fill="none" stroke="#000" strokeWidth="4" />
        </svg>
        <input
          type="text"
          aria-label="Search"
          placeholder="Type here to search"
          className="ml-[18px] flex-1 text-[27px] leading-9 text-[#2b2b2b] outline-none placeholder:text-[#2b2b2b]"
        />
        <svg viewBox="0 0 24 36" className="h-9 w-6">
          <rect x="7.500" y="1.500" width="9" height="20" rx="4.500" fill="none" stroke="#222" strokeWidth="2" />
          <path d="M2 16 V19 Q2 27 12 27 Q22 27 22 19 V16 M12 27 V33 M8 34 H16" fill="none" stroke="#222" strokeWidth="2" />
        </svg>
      </div>
      <div className="flex pl-0.5">
        <TaskButton label="Task view">
          <svg viewBox="0 0 32 30" className="h-[30px] w-8">
            <path d="M1 0 V4.500 H21 V0 M1 30 V25.500 H21 V30 M1.500 9 H20.500 V21 H1.500 Z M29 0 V6 M29 17 V30" fill="none" stroke="#fff" strokeWidth="2" />
            <circle cx="29" cy="11" r="3" fill="#fff" />
          </svg>
        </TaskButton>
        <TaskButton label="Edge">
          <FaEdgeLegacy className="size-[42px] text-[#0078d7]" />
        </TaskButton>
        <TaskButton label="File Explorer" state="alert">
          <svg viewBox="0 0 42 36" className="h-9 w-[42px]">
            <path d="M0 1 H16 L20 4 H41 V34 H0 Z" fill="#ffe694" />
            <path d="M0 1 H16 L20 7 L0 8 Z" fill="#f8c73b" />
            <rect x="3" y="2.500" width="8" height="2.500" fill="#fff" />
            <path d="M7 19 H35 V35 H27 V27 H15 V35 H7 Z" fill="#3cb4e6" />
          </svg>
        </TaskButton>
        <TaskButton label="Store">
          <svg viewBox="0 0 46 46" className="size-[46px]">
            <path d="M15 12 V9 Q16 1 23 1 Q30 1 34 12 M18 12 Q20 3 26 3 Q31 4 31 12" fill="none" stroke="#fff" strokeWidth="2" />
            <path d="M0 12 H46 V42 Q46 45 43 45 H3 Q0 45 0 42 Z" fill="#fff" />
            <rect x="13" y="19" width="9.500" height="9" fill="#f25022" />
            <rect x="23.500" y="19" width="9.500" height="9" fill="#7fba00" />
            <rect x="13" y="29" width="9.500" height="9" fill="#00a4ef" />
            <rect x="23.500" y="29" width="9.500" height="9" fill="#ffb900" />
          </svg>
        </TaskButton>
        <TaskButton label="Mail">
          <svg viewBox="0 0 48 38" className="h-[38px] w-12">
            <path d="M0 11 L24 0 L48 11 V38 H0 Z" fill="#fff" />
            <path d="M1 12 H47 L29 22 L40 33 Z" fill="#070707" />
          </svg>
        </TaskButton>
        <TaskButton label="Outlook" state="stack">
          <svg viewBox="0 0 50 50" className="mt-2.5 size-[50px]">
            <rect x="24" y="9" width="18" height="24" fill="#fff" stroke="#0072c6" strokeWidth="2" />
            <path d="M25 15 L32 23 L42 12" fill="none" stroke="#0072c6" strokeWidth="3" />
            <path d="M0 4 L25 0 V42 L0 38 Z" fill="#0072c6" />
            <text x="12" y="29" textAnchor="middle" fontSize="20" fontWeight="700" fontFamily="Open Sans, sans-serif" fill="#fff">
              O
            </text>
            <rect x="20" y="28" width="29" height="21" fill="#e9b470" />
            <path d="M21 30 L34.500 43 L48 30" fill="none" stroke="#fdf1df" strokeWidth="2" />
          </svg>
        </TaskButton>
        <TaskButton label="Chrome" state="open">
          <svg viewBox="0 0 48 48" className="size-[46px]">
            <path d="M4.400 12 A23 23 0 0 1 44.200 13 H24 A11 11 0 0 0 14.500 29.500 Z" fill="#dd4b3e" />
            <path d="M44.200 13 A23 23 0 0 1 23.400 47 L33.500 29.500 A11 11 0 0 0 24 13 Z" fill="#ffcd42" />
            <path d="M23.400 47 A23 23 0 0 1 4.400 12 L14.500 29.500 A11 11 0 0 0 33.500 29.500 Z" fill="#1b9f5e" />
            <circle cx="24" cy="24" r="11" fill="#f4f4f4" />
            <circle cx="24" cy="24" r="9" fill="#4c8bf5" />
          </svg>
        </TaskButton>
        <TaskButton label="Excel" state="open">
          <OfficeIcon letter="X" color="#207245" lines="grid" />
        </TaskButton>
        <TaskButton label="Word" state="open">
          <OfficeIcon letter="W" color="#2a5699" lines="text" />
        </TaskButton>
        <TaskButton label="Remote Desktop" state="active">
          <svg viewBox="0 0 50 52" className="h-[52px] w-[50px]">
            <g transform="scale(1.5)">
              <LogoArt />
            </g>
            <circle cx="36" cy="37" r="14" fill="#eceeed" stroke="#9a9a9a" strokeWidth="2" />
            <path d="M28 34 L34 40 L28 46 M44 28 L38 34 L44 40" fill="none" stroke="#4caf2f" strokeWidth="3.500" />
          </svg>
        </TaskButton>
      </div>
      <div className="ml-auto flex">
        <div className={`${tray} w-24`}>
          <svg viewBox="0 0 30 30" className="size-[30px]">
            <circle cx="20" cy="6" r="5" fill="none" stroke="#fff" strokeWidth="2" />
            <path d="M14 14 Q16 11.500 20 11.500 Q28 11.500 29 19" fill="none" stroke="#fff" strokeWidth="2" />
            <circle cx="9" cy="17" r="5" fill="none" stroke="#fff" strokeWidth="2" />
            <path d="M1 30 Q2 22.500 9 22.500 Q16 22.500 17 30" fill="none" stroke="#fff" strokeWidth="2" />
          </svg>
        </div>
        <div className={`${tray} w-16`}>
          <svg viewBox="0 0 26 16" className="h-4 w-[26px]">
            <path d="M1 15 L13 2 L25 15" fill="none" stroke="#fff" strokeWidth="2" />
          </svg>
        </div>
        <div className={`${tray} w-16`}>
          <svg viewBox="0 0 32 22" className="h-[22px] w-8">
            <path d="M6 15 Q0 14 0 10 Q0 6 5 6 Q6 1 11.500 .5 Q16 -1 20 3 Q23 3 24 6 Q19 4 15 9 Q9 8 6 15 Z" fill="#fff" />
            <path d="M11 21 Q7 20 7.500 16 Q9 11 14 12 Q16 7 21 8 Q26 8 27 13 Q32 13 32 17 Q32 21 28 21 Z" fill="#fff" />
          </svg>
        </div>
        <div className={`${tray} w-16`}>
          <svg viewBox="0 0 31 18" className="h-[18px] w-[31px]">
            <path d="M1 1 H27 V5 H30 V13 H27 V17 H1 Z" fill="none" stroke="#fff" strokeWidth="2" />
            <rect x="4" y="4" width="13" height="10" fill="#fff" />
          </svg>
        </div>
        <div className={`${tray} w-16`}>
          <svg viewBox="0 0 26 26" className="size-[26px]">
            <path d="M1 25 Q2 3 25 1 M7 25 Q8 9 25 7 M13 25 Q14 14 25 13" fill="none" stroke="#fff" strokeWidth="1.800" />
            <path d="M18 25 Q18 19 25 19" fill="none" stroke="#fff" strokeWidth="1.800" />
            <circle cx="23" cy="23" r="3" fill="#fff" />
          </svg>
        </div>
        <div className={`${tray} w-16`}>
          <svg viewBox="0 0 32 28" className="h-7 w-8">
            <path d="M1 9 H6 L13 2 V26 L6 19 H1 Z" fill="none" stroke="#fff" strokeWidth="2" />
            <path d="M17 9 Q20 14 17 19 M21 6 Q27 14 21 22" fill="none" stroke="#fff" strokeWidth="2" />
            <path d="M26 3 Q34 14 26 26" fill="none" stroke="#777" strokeWidth="2" />
          </svg>
        </div>
        <div className={`${tray} w-20`}>
          <svg viewBox="0 0 34 32" className="h-8 w-[34px]">
            <path d="M24 2 L28 4 L17 26 L11 30 L12 23 Z M21 8 L25 10" fill="none" stroke="#fff" strokeWidth="2" />
            <path d="M28 10 Q33 10 33 13 Q33 17 27 17 M11 17 Q1 18 1 25 Q1 31 7 30 Q10 29 9 26" fill="none" stroke="#fff" strokeWidth="2" />
          </svg>
        </div>
        <div className="flex w-[134px] flex-col items-center justify-center gap-1 text-[23px] leading-8">
          <span>12:13 PM</span>
          <span>4/16/2019</span>
        </div>
        <button type="button" aria-label="Notifications, 5 new" className="flex w-24 items-center justify-center">
          <span className="relative mt-2 h-12 w-[46px]">
            <svg viewBox="0 0 46 48" className="h-12 w-[46px]">
              <path d="M0 0 H32 V25 H17 L10 32 V25 H0 Z" fill="#fff" />
              <path d="M6 6.500 H26 M6 12.500 H26 M6 18.500 H18" stroke="#070707" strokeWidth="2" />
              <circle cx="30" cy="30" r="15.500" fill="#1f1f1f" fillOpacity=".9" stroke="#8d8d8d" strokeWidth="2" />
            </svg>
            <span className="absolute right-0 bottom-0.5 w-8 text-center text-[20px] leading-8 font-semibold">5</span>
          </span>
        </button>
        <div className="ml-0.5 w-[9px] border-l-2 border-[#6b6b6b]" />
      </div>
    </footer>
  );
}

export default function App() {
  return (
    <div className={`flex min-h-screen flex-col bg-[#f0f0f0] ${formFont}`}>
      <TitleBar />
      <MenuBar />
      <div className="flex flex-1">
        <Sidebar />
        <main className="mt-0.5 mr-0.5 ml-[18px] grid min-w-0 flex-1 bg-[#ababab]">
          <BackWindow />
          <VendorDialog />
        </main>
      </div>
      <div className="mt-0.5">
        <StatusBar />
      </div>
      <Taskbar />
    </div>
  );
}
